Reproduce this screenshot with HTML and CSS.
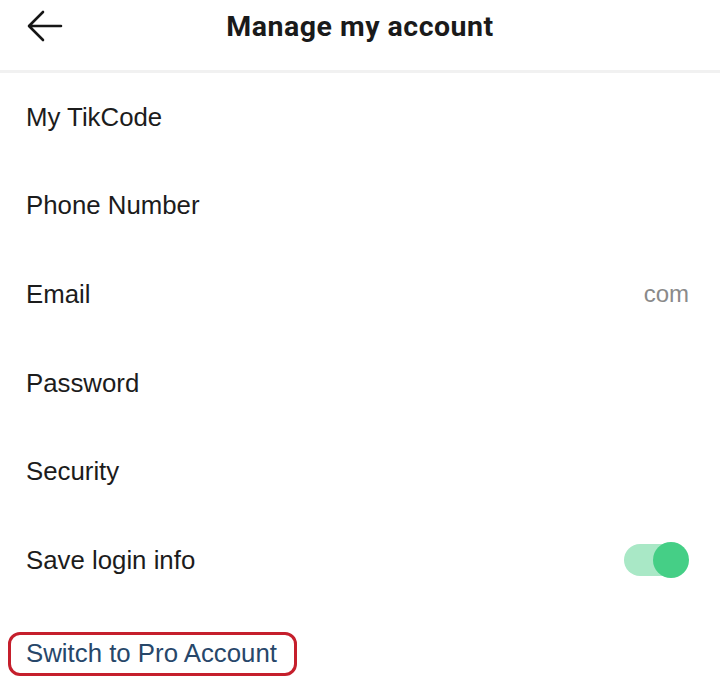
FILE: index.html
```html
<!DOCTYPE html>
<html>
<head>
<meta charset="utf-8">
<link rel="stylesheet" href="styles.css">
</head>
<body>
<div class="page">
  <header class="topbar">
    <span class="back">
      <svg width="36" height="32" viewBox="0 0 36 32"><path d="M34 16H3M16 2L2 16l14 14" fill="none" stroke="#161616" stroke-width="2.6" stroke-linecap="round" stroke-linejoin="round"/></svg>
    </span>
    <h1 class="title">Manage my account</h1>
  </header>
  <div class="list">
    <div class="row"><span>My TikCode</span></div>
    <div class="row"><span>Phone Number</span></div>
    <div class="row"><span>Email</span><span class="value">com</span></div>
    <div class="row"><span>Password</span></div>
    <div class="row"><span>Security</span></div>
    <div class="row"><span>Save login info</span><span class="toggle"><span class="knob"></span></span></div>
  </div>
  <div class="pro"><span class="pro-link">Switch to Pro Account</span></div>
</div>
</body>
</html>
```

FILE: styles.css
```css
html, body { margin: 0; padding: 0; background: #fff; }
.page { width: 720px; height: 689px; overflow: hidden; font-family: "Liberation Sans", Arial, sans-serif; color: #161616; }
.topbar { height: 70px; border-bottom: 3px solid #f1f1f1; display: flex; align-items: center; justify-content: center; position: relative; }
.back { position: absolute; left: 27px; top: 10px; }
.title { margin: 0 0 18px 0; font-family: Roboto, "Liberation Sans", sans-serif; font-weight: 700; font-size: 28.5px; letter-spacing: 0.5px; color: #1a1a1a; }
.list { display: flex; flex-direction: column; padding-top: 0; }
.row { height: 88.6px; display: flex; align-items: center; justify-content: space-between; padding: 0 31px 0 26px; font-size: 25.8px; color: #1c1c1c; }
.value { color: #8a8a8a; font-size: 24px; }
.toggle { width: 64px; height: 32px; border-radius: 16px; background: #a9e8c6; position: relative; margin-right: 1px; }
.knob { position: absolute; right: -1px; top: -2px; width: 36px; height: 36px; border-radius: 50%; background: #45cf86; }
.pro { padding: 27px 0 0 8px; }
.pro-link { display: inline-block; padding: 4px 17px 5px 15px; border: 3px solid #c51f2c; border-radius: 12px; font-size: 25.8px; color: #27476a; }
```
